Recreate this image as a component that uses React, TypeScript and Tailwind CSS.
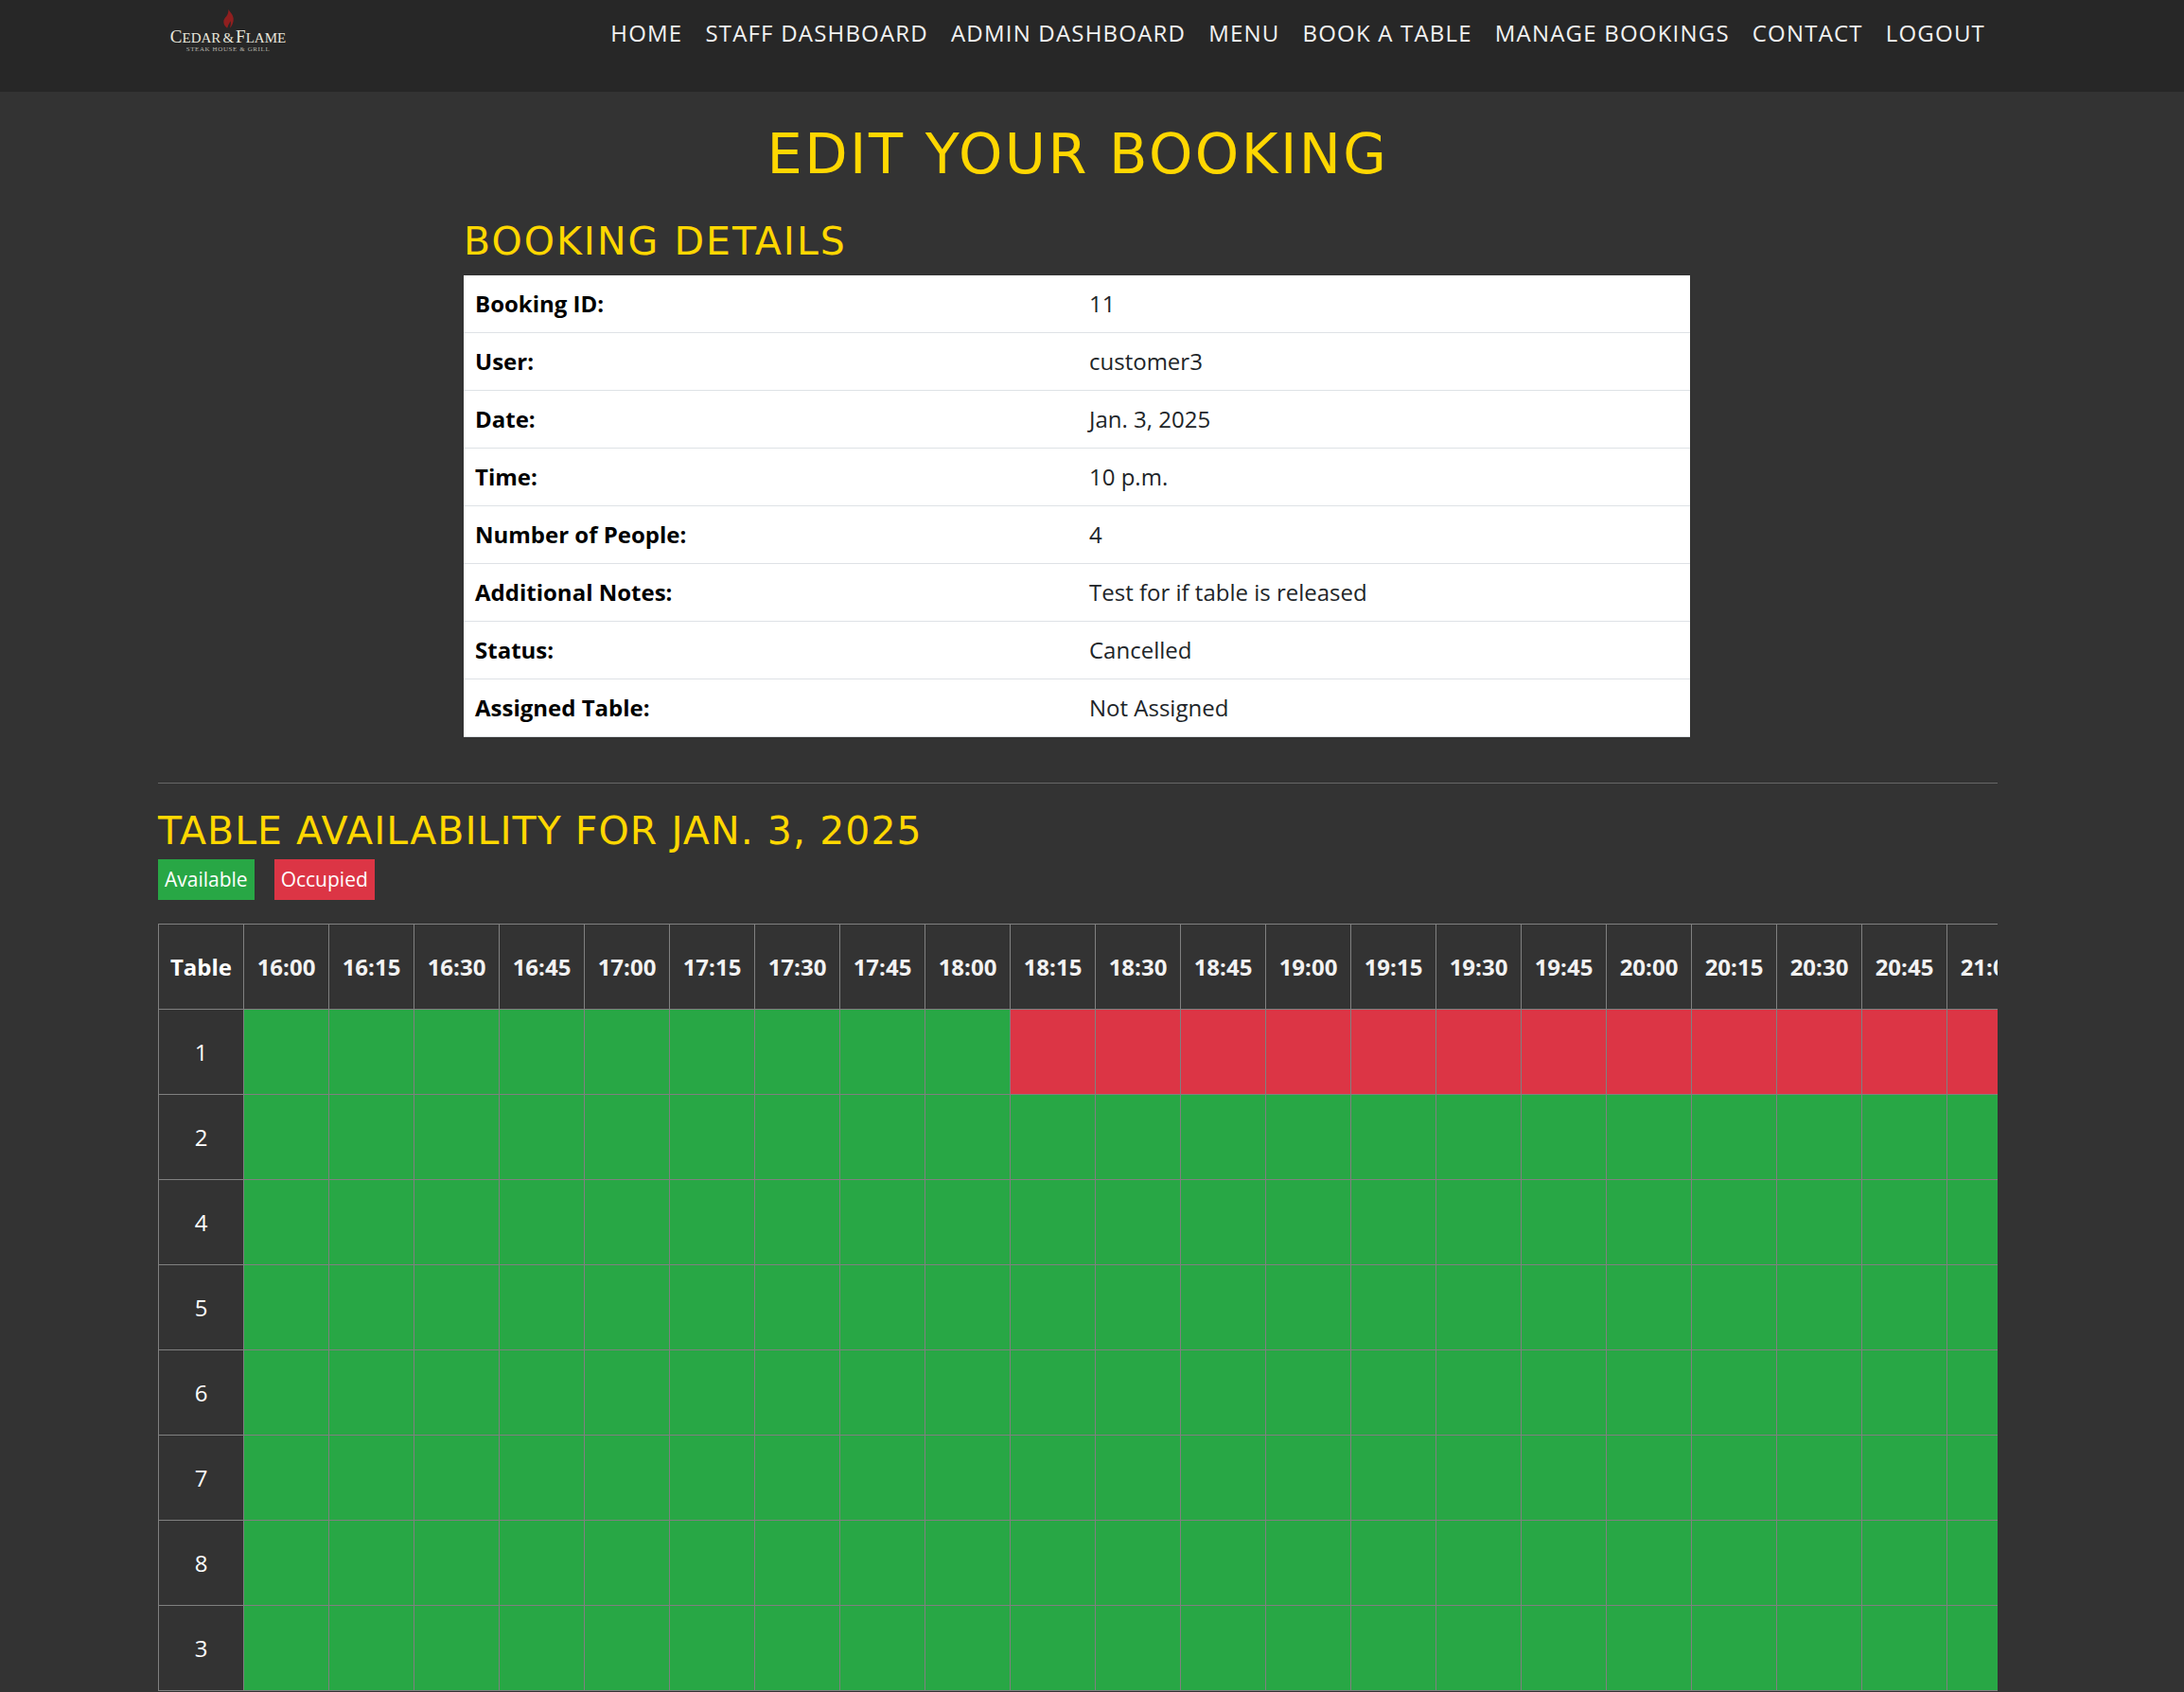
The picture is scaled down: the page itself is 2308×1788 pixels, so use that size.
const NAV = ['Home', 'Staff Dashboard', 'Admin Dashboard', 'Menu', 'Book a Table', 'Manage Bookings', 'Contact', 'Logout']

const DETAILS = [
  ['Booking ID:', '11'],
  ['User:', 'customer3'],
  ['Date:', 'Jan. 3, 2025'],
  ['Time:', '10 p.m.'],
  ['Number of People:', '4'],
  ['Additional Notes:', 'Test for if table is released'],
  ['Status:', 'Cancelled'],
  ['Assigned Table:', 'Not Assigned'],
]

const TIMES = ['16:00', '16:15', '16:30', '16:45', '17:00', '17:15', '17:30', '17:45', '18:00', '18:15', '18:30', '18:45', '19:00', '19:15', '19:30', '19:45', '20:00', '20:15', '20:30', '20:45', '21:00']
const TABLES = ['1', '2', '4', '5', '6', '7', '8', '3']

function Logo() {
  return (
    <div className="w-[130px] flex flex-col items-center pt-[9px] font-['Liberation_Serif',serif] text-[#e8e6dc] leading-none">
      <svg width="13" height="22" viewBox="0 0 14 22">
        <path d="M7 0c1 3 5 5 5.600 10.500C13 15 11 19 8.500 21.500 9.500 18 10 15.500 9 13.500 8.500 15 8 16.500 7 17.500 6.500 19 6 20.500 5.500 21.500 2.500 19.500 1 16.500 1.500 13 2 10 5 8 6 5.500 6.700 3.500 7 2 7 0Z" fill="#8f1f1f" />
      </svg>
      <span className="mt-[-2px] h-[16px] flex items-baseline whitespace-nowrap text-[15px]">
        <span className="text-[19px]">C</span>EDAR
        <span className="mx-[2px]">&amp;</span>
        <span className="text-[19px]">F</span>LAME
      </span>
      <span className="text-[7px] mt-[4px] whitespace-nowrap tracking-[0.6px] text-[#b5b3aa]">STEAK HOUSE &amp; GRILL</span>
    </div>
  )
}

export default function App() {
  return (
    <div className="h-[1788px] overflow-hidden bg-[#333333] font-['Open_Sans',sans-serif] text-white">
      <nav className="h-[97px] bg-[#272727] pl-[176px] pr-[210px] flex items-start justify-between">
        <Logo />
        <ul className="flex gap-[24px] pt-[17px] text-[24px] leading-[36px] tracking-[1.2px] text-[#f2f2f2] uppercase">
          {NAV.map((n) => (
            <li key={n}>{n}</li>
          ))}
        </ul>
      </nav>

      <main className="w-[1944px] ml-[167px]">
        <h1 className="mt-[31px] text-center text-[59px] leading-[70px] tracking-[2.45px] text-[#ffd700] font-['DejaVu_Sans',sans-serif] font-normal uppercase">Edit your booking</h1>

        <div className="w-[1296px] ml-[323px]">
          <h2 className="mt-[32px] mb-[11px] text-[41px] leading-[50px] tracking-[2px] text-[#ffd700] font-['DejaVu_Sans',sans-serif] uppercase">Booking Details</h2>
          <div className="bg-white text-[#212529] text-[24px] border-b border-[#dee2e6]">
            {DETAILS.map(([k, v], i) => (
              <div key={k} className={`grid grid-cols-2 items-center px-[12px] ${i > 0 ? 'h-[61px] border-t border-[#dee2e6]' : 'h-[60px]'}`}>
                <span className="font-bold text-black">{k}</span>
                <span className="pl-[13px]">{v}</span>
              </div>
            ))}
          </div>
        </div>

        <hr className="mt-[48px] border-[#666]" />

        <h2 className="mt-[25px] text-[41px] leading-[50px] tracking-[1.05px] text-[#ffd700] font-['DejaVu_Sans',sans-serif] uppercase">Table Availability for Jan. 3, 2025</h2>
        <div className="mt-[5px] flex gap-[21px] text-[21px]">
          <span className="h-[43px] px-[7px] pt-[1px] flex items-center bg-[#28a745]">Available</span>
          <span className="h-[43px] px-[7px] pt-[1px] flex items-center bg-[#dc3545]">Occupied</span>
        </div>

        <div className="mt-[25px] overflow-hidden">
          <table className="border-collapse table-fixed w-max text-[24px] border border-[#808080]">
            <thead>
              <tr>
                <th className="w-[90px] min-w-[90px] h-[90px] border border-[#808080] font-bold">Table</th>
                {TIMES.map((t) => (
                  <th key={t} className="w-[90px] min-w-[90px] h-[90px] border border-[#808080] font-bold text-[#f2f2f2]">{t}</th>
                ))}
              </tr>
            </thead>
            <tbody>
              {TABLES.map((row, r) => (
                <tr key={row}>
                  <td className="h-[90px] border border-[#808080] text-center">{row}</td>
                  {TIMES.map((t, c) => (
                    <td key={t} className={`h-[90px] border border-[#808080] ${r === 0 && c >= 9 ? 'bg-[#dc3545]' : 'bg-[#28a745]'}`} />
                  ))}
                </tr>
              ))}
            </tbody>
          </table>
        </div>
      </main>
    </div>
  )
}
